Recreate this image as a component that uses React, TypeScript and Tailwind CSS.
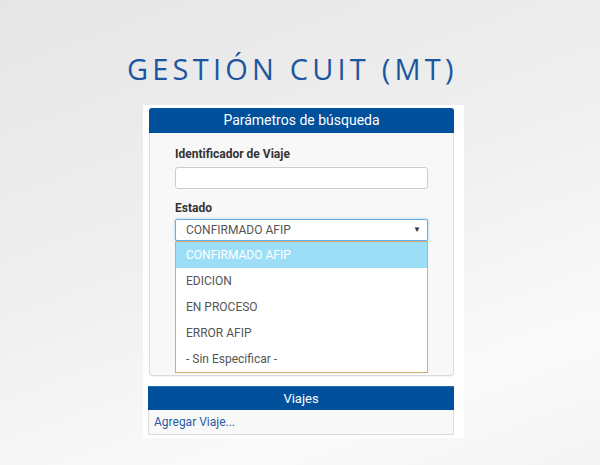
import React from "react";

const options = ["EDICION", "EN PROCESO", "ERROR AFIP", "- Sin Especificar -"];

export default function App() {
  return (
    <div
      className="w-[600px] h-[465px] overflow-hidden bg-[linear-gradient(160deg,#e6e6e6_0%,#efefef_45%,#fafafa_80%,#f4f4f4_100%)]"
      style={{ fontFamily: "Roboto, 'Liberation Sans', sans-serif" }}
    >
      <div className="h-[105px] pt-[51px] pl-[127px]">
        <h1
          className="text-[29px] leading-[36px] tracking-[0.145em] text-[#1d56a0] whitespace-nowrap"
          style={{ fontFamily: "'Open Sans', sans-serif", fontWeight: 400 }}
        >
          GESTIÓN CUIT (MT)
        </h1>
      </div>
      <div className="ml-[143px] w-[321px] bg-white pl-[6px] pr-[10px] pt-[3px] pb-[3px]">
        <div className="rounded-t-[3px] bg-[#00509c] h-[25px] flex items-center justify-center text-white text-[14px]">
          Parámetros de búsqueda
        </div>
        <div className="border border-t-0 border-[#dcdcdc] rounded-b-[4px] bg-[#f8f8f8] px-[25px] pt-[13px] pb-[2px] shadow-[0_1px_1px_rgba(0,0,0,0.05)]">
          <div className="text-[12px] font-bold text-[#333] leading-[17px]">Identificador de Viaje</div>
          <div className="mt-[4px] h-[22px] bg-white border border-[#cccccc] rounded-[3px]" />
          <div className="mt-[11px] text-[12px] font-bold text-[#333] leading-[17px]">Estado</div>
          <div className="mt-[2px] h-[22px] bg-white border border-[#66afe9] rounded-[2px] shadow-[0_0_3px_rgba(102,175,233,0.6)] flex items-center pl-[10px] pr-[6px] text-[12px] text-[#555]">
            <span className="flex-1">CONFIRMADO AFIP</span>
            <span className="text-[8px] text-[#333]">▼</span>
          </div>
          <div className="border border-[#d3ac70] bg-white">
            <div className="h-[26px] bg-[#9cdef6] text-white text-[12px] flex items-center pl-[10px]">
              CONFIRMADO AFIP
            </div>
            {options.map((o) => (
              <div key={o} className="h-[26px] text-[12px] text-[#555] flex items-center pl-[10px]">
                {o}
              </div>
            ))}
          </div>
        </div>
        <div className="mt-[10px] -ml-px bg-[#00509c] h-[24px] flex items-center justify-center text-white text-[13px] border-t border-[#2a6bb0]">
          Viajes
        </div>
        <div className="-ml-px h-[25px] border border-t-0 border-[#dcdcdc] bg-[#f8f8f8] flex items-center pl-[5px] text-[12px] text-[#2a5aa6]">
          Agregar Viaje...
        </div>
      </div>
    </div>
  );
}
